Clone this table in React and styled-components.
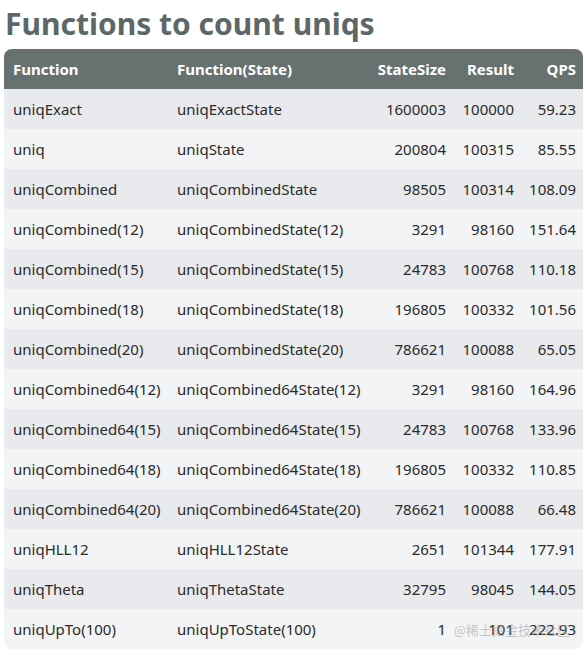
import React from "react";
import styled, { createGlobalStyle } from "styled-components";

const rows = [
  ["uniqExact", "uniqExactState", "1600003", "100000", "59.23"],
  ["uniq", "uniqState", "200804", "100315", "85.55"],
  ["uniqCombined", "uniqCombinedState", "98505", "100314", "108.09"],
  ["uniqCombined(12)", "uniqCombinedState(12)", "3291", "98160", "151.64"],
  ["uniqCombined(15)", "uniqCombinedState(15)", "24783", "100768", "110.18"],
  ["uniqCombined(18)", "uniqCombinedState(18)", "196805", "100332", "101.56"],
  ["uniqCombined(20)", "uniqCombinedState(20)", "786621", "100088", "65.05"],
  ["uniqCombined64(12)", "uniqCombined64State(12)", "3291", "98160", "164.96"],
  ["uniqCombined64(15)", "uniqCombined64State(15)", "24783", "100768", "133.96"],
  ["uniqCombined64(18)", "uniqCombined64State(18)", "196805", "100332", "110.85"],
  ["uniqCombined64(20)", "uniqCombined64State(20)", "786621", "100088", "66.48"],
  ["uniqHLL12", "uniqHLL12State", "2651", "101344", "177.91"],
  ["uniqTheta", "uniqThetaState", "32795", "98045", "144.05"],
  ["uniqUpTo(100)", "uniqUpToState(100)", "1", "101", "222.93"],
];

const GlobalStyle = createGlobalStyle`
  body {
    margin: 0;
    background: #fff;
    font-family: "Noto Sans", "Open Sans", sans-serif;
  }
`;

const Page = styled.div`
  padding: 0 5px 0 4px;
`;

const Title = styled.h1`
  margin: 0 0 0 1px;
  height: 49px;
  line-height: 48px;
  font-size: 30px;
  font-weight: 700;
  color: #5d6767;
`;

const Frame = styled.div`
  position: relative;
  width: 579px;
  border-radius: 8px;
  overflow: hidden;
`;

const Table = styled.table`
  width: 579px;
  table-layout: fixed;
  border-collapse: collapse;
  font-size: 15px;
  color: #2b2b2b;
`;

const Head = styled.th`
  height: 40px;
  padding: 0 ${(p) => (p.$right ? "7px" : "9px")};
  background: #677170;
  color: #fff;
  font-weight: 700;
  text-align: ${(p) => (p.$right ? "right" : "left")};
  white-space: nowrap;
`;

const Row = styled.tr`
  background: ${(p) => (p.$odd ? "#e9eaed" : "#f3f4f6")};
`;

const Cell = styled.td`
  height: 40px;
  padding: 0 ${(p) => (p.$right ? "7px" : "9px")};
  text-align: ${(p) => (p.$right ? "right" : "left")};
  white-space: nowrap;
`;

const Watermark = styled.span`
  position: absolute;
  right: 13px;
  bottom: 10px;
  font-size: 13px;
  color: rgba(150, 150, 150, 0.5);
  font-family: "Noto Sans CJK SC", sans-serif;
  pointer-events: none;
`;

const widths = [164, 200, 85, 68, 62];
const heads = ["Function", "Function(State)", "StateSize", "Result", "QPS"];

export default function App() {
  return (
    <Page>
      <GlobalStyle />
      <Title>Functions to count uniqs</Title>
      <Frame>
        <Table>
          <colgroup>
            {widths.map((w, i) => (
              <col key={i} style={{ width: w }} />
            ))}
          </colgroup>
          <thead>
            <tr>
              {heads.map((h, i) => (
                <Head key={h} $right={i > 1}>
                  {h}
                </Head>
              ))}
            </tr>
          </thead>
          <tbody>
            {rows.map((r, i) => (
              <Row key={r[0]} $odd={i % 2 === 0}>
                {r.map((c, j) => (
                  <Cell key={j} $right={j > 1}>
                    {c}
                  </Cell>
                ))}
              </Row>
            ))}
          </tbody>
        </Table>
        <Watermark>@稀土掘金技术社区</Watermark>
      </Frame>
    </Page>
  );
}
